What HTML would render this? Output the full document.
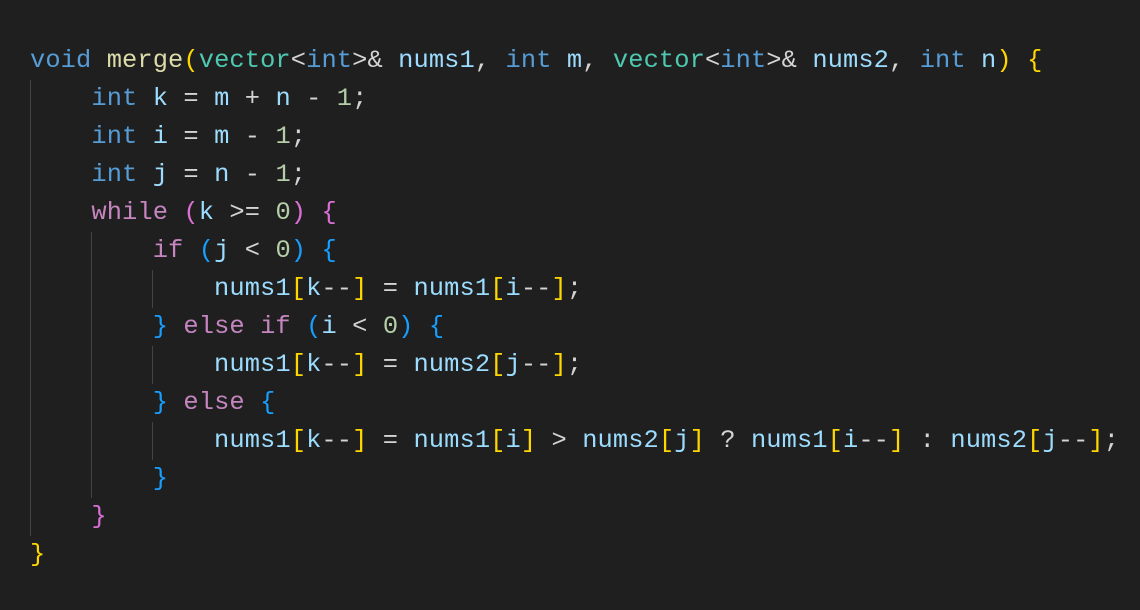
<!DOCTYPE html>
<html><head><meta charset="utf-8"><style>
html,body{margin:0;padding:0;background:#1f1f1f;width:1140px;height:610px;overflow:hidden}
.c{position:absolute;left:30px;top:42px;font-family:"Liberation Mono",monospace;font-size:25.4px;letter-spacing:0.1px;line-height:38px;white-space:pre;color:#d4d4d4}
.k{color:#569cd6}.p{color:#c586c0}.f{color:#dcdcaa}.t{color:#4ec9b0}.v{color:#9cdcfe}.n{color:#b5cea8}
.g{color:#ffd700}.m{color:#da70d6}.b{color:#179fff}
.ig{position:absolute;width:1px;background:#444}
</style></head><body>
<div class="ig" style="left:30px;top:80px;height:456px"></div>
<div class="ig" style="left:91px;top:232px;height:266px"></div>
<div class="ig" style="left:152px;top:270px;height:38px"></div>
<div class="ig" style="left:152px;top:346px;height:38px"></div>
<div class="ig" style="left:152px;top:422px;height:38px"></div>
<div class="c"><span class="k">void</span> <span class="f">merge</span><span class="g">(</span><span class="t">vector</span>&lt;<span class="k">int</span>&gt;&amp; <span class="v">nums1</span>, <span class="k">int</span> <span class="v">m</span>, <span class="t">vector</span>&lt;<span class="k">int</span>&gt;&amp; <span class="v">nums2</span>, <span class="k">int</span> <span class="v">n</span><span class="g">)</span> <span class="g">{</span>
    <span class="k">int</span> <span class="v">k</span> = <span class="v">m</span> + <span class="v">n</span> - <span class="n">1</span>;
    <span class="k">int</span> <span class="v">i</span> = <span class="v">m</span> - <span class="n">1</span>;
    <span class="k">int</span> <span class="v">j</span> = <span class="v">n</span> - <span class="n">1</span>;
    <span class="p">while</span> <span class="m">(</span><span class="v">k</span> &gt;= <span class="n">0</span><span class="m">)</span> <span class="m">{</span>
        <span class="p">if</span> <span class="b">(</span><span class="v">j</span> &lt; <span class="n">0</span><span class="b">)</span> <span class="b">{</span>
            <span class="v">nums1</span><span class="g">[</span><span class="v">k</span>--<span class="g">]</span> = <span class="v">nums1</span><span class="g">[</span><span class="v">i</span>--<span class="g">]</span>;
        <span class="b">}</span> <span class="p">else</span> <span class="p">if</span> <span class="b">(</span><span class="v">i</span> &lt; <span class="n">0</span><span class="b">)</span> <span class="b">{</span>
            <span class="v">nums1</span><span class="g">[</span><span class="v">k</span>--<span class="g">]</span> = <span class="v">nums2</span><span class="g">[</span><span class="v">j</span>--<span class="g">]</span>;
        <span class="b">}</span> <span class="p">else</span> <span class="b">{</span>
            <span class="v">nums1</span><span class="g">[</span><span class="v">k</span>--<span class="g">]</span> = <span class="v">nums1</span><span class="g">[</span><span class="v">i</span><span class="g">]</span> &gt; <span class="v">nums2</span><span class="g">[</span><span class="v">j</span><span class="g">]</span> ? <span class="v">nums1</span><span class="g">[</span><span class="v">i</span>--<span class="g">]</span> : <span class="v">nums2</span><span class="g">[</span><span class="v">j</span>--<span class="g">]</span>;
        <span class="b">}</span>
    <span class="m">}</span>
<span class="g">}</span></div>
</body></html>
